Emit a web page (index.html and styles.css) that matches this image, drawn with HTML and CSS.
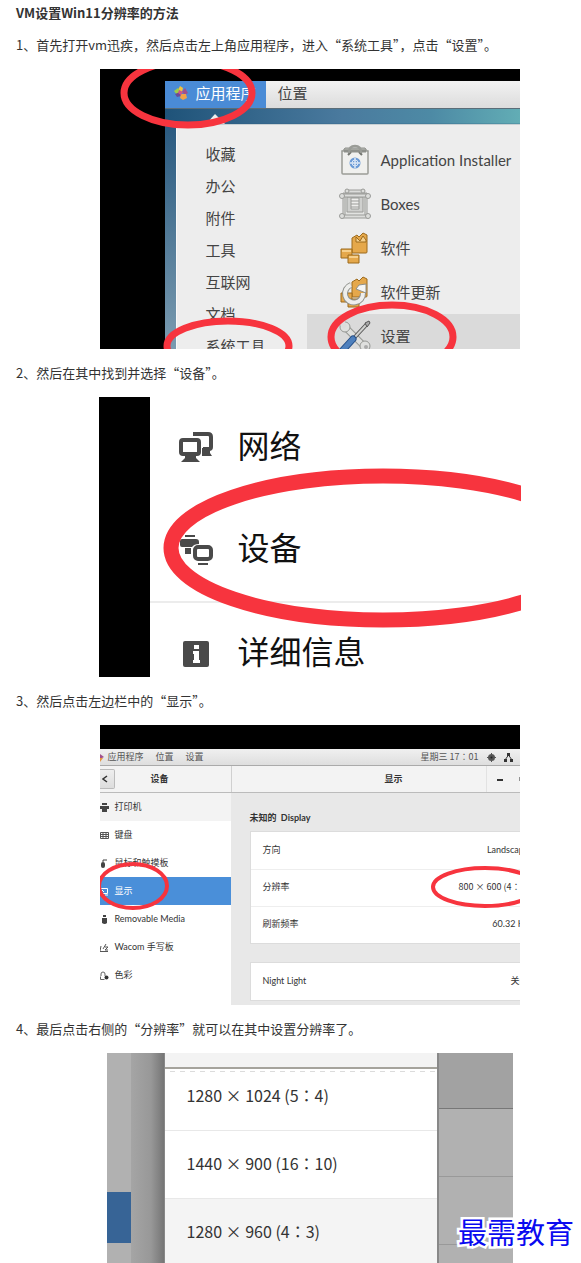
FILE: index.html
```html
<!DOCTYPE html>
<html lang="zh-CN">
<head>
  <meta charset="UTF-8">
  <meta name="viewport" content="width=device-width, initial-scale=1.0">
  <title>VM设置Win11分辨率的方法</title>
  <link rel="stylesheet" href="styles.css">
</head>
<body>

  <article class="article">
    <h1>VM设置Win11分辨率的方法</h1>

    <p>1、首先打开vm迅疾，然后点击左上角应用程序，进入“系统工具”，点击“设置”。</p>

    <!-- Step 1: applications menu -->
    <figure>
      <div class="shot apps">
        <div class="desktop">
          <div class="panel-bar">
            <button class="apps-button">
              <svg width="14" height="14" viewBox="0 0 14 14">
                <path fill="#f4c13a" d="M6 0l3 2-1 4-4-2z"/>
                <path fill="#9ccd4a" d="M0 5l4-3 3 4-4 3z"/>
                <path fill="#a14f8c" d="M8 6l3-4 3 5-3 2z"/>
                <path fill="#6a4a97" d="M1 8l5-2 1 4-4 1z"/>
                <path fill="#f1a24a" d="M7 8l5 0 1 4-4 2-3-2z"/>
                <path fill="#c9568a" d="M5 4l4 2-2 3-3-2z"/>
              </svg>
              应用程序
            </button>
            <button class="places-button">位置</button>
          </div>
          <div class="app-menu">
            <ul class="categories">
              <li><a href="#">收藏</a></li>
              <li><a href="#">办公</a></li>
              <li><a href="#">附件</a></li>
              <li><a href="#">工具</a></li>
              <li><a href="#">互联网</a></li>
              <li><a href="#">文档</a></li>
              <li><a href="#">系统工具</a></li>
            </ul>
            <ul class="programs">
              <li><a href="#">
                <svg width="28" height="32" viewBox="2 0 28 32">
                  <path d="M3 8l3-4h20l3 4z" fill="#b9bbb6" stroke="#8e908b"/>
                  <path d="M3 7h26v22q0 1-1 1H4q-1 0-1-1z" fill="#f0f0ee" stroke="#9a9c97" stroke-width="1.5"/>
                  <path d="M5 7h22" stroke="#8e908b" stroke-width="3"/>
                  <path d="M9 11l3-3M23 11l-3-3" stroke="#73756f" stroke-width="2"/>
                  <path d="M10 9q0-7 6-7t6 7" fill="none" stroke="#9a9c97" stroke-width="2.5"/>
                  <circle cx="16" cy="19" r="5.5" fill="#6c9bd6"/>
                  <path d="M16 14v10M11 19h10" stroke="#dbe7f5" stroke-width="1.5"/>
                  <circle cx="16" cy="19" r="3" fill="none" stroke="#dbe7f5"/>
                </svg>
                Application Installer</a></li>
              <li><a href="#">
                <svg width="32" height="32" viewBox="0 0 32 32" fill="#dcdddb" stroke="#9a9b98">
                  <path d="M4 5h24v24H4z" fill="#e2e3e1"/>
                  <path d="M8 9h16v15H8z" fill="#cfd0ce"/>
                  <path d="M12 10h8v11h-8z" fill="#eeeeec"/>
                  <path d="M12 13h8M12 16h8M12 19h8M6 5v24M26 5v24" fill="none"/>
                  <path d="M7 2h18v3H7zM3 6h26v3H3zM2 27h28v3H2z"/>
                  <circle cx="3" cy="8" r="2.5"/><circle cx="29" cy="8" r="2.5"/>
                  <circle cx="8" cy="3" r="2"/><circle cx="24" cy="3" r="2"/>
                  <circle cx="3" cy="28" r="2.5"/><circle cx="29" cy="28" r="2.5"/>
                </svg>
                Boxes</a></li>
              <li><a href="#">
                <svg width="32" height="32" viewBox="0 0 32 32" fill="#e5a84b" stroke="#9c6a1d">
                  <path d="M13 6l5-3 2 2 4-4 4 2v17q0 1-1 1H14q-1 0-1-1z"/>
                  <path d="M17 10V5l4 4 3-5 3 4v2z" fill="#f6d08c"/>
                  <path d="M2 17h11v9H2z"/><path d="M3 18h9v2H3z" fill="#f6cf8b" stroke="none"/>
                  <path d="M9 23h11v8H9z"/><path d="M10 24h9v2h-9z" fill="#f6cf8b" stroke="none"/>
                </svg>
                软件</a></li>
              <li><a href="#">
                <svg width="32" height="32" viewBox="0 0 32 32" fill="#e5a84b" stroke="#9c6a1d">
                  <path d="M13 6l5-3 2 2 4-4 4 2v17q0 1-1 1H14q-1 0-1-1z"/>
                  <path d="M2 17h11v9H2zM9 23h11v8H9z"/>
                  <path d="M12 9a9 9 0 1 0 12 8" fill="none" stroke="#8d8f8a" stroke-width="6"/>
                  <path d="M12 9a9 9 0 1 0 12 8" fill="none" stroke="#eeeeec" stroke-width="4"/>
                  <path d="M17 13l3-4 7-1v9z" fill="#f6f6f4" stroke="#8d8f8a"/>
                </svg>
                软件更新</a></li>
              <li class="selected"><a href="#">
                <svg width="32" height="32" viewBox="0 0 32 32">
                  <path d="M5 6l22 22" stroke="#969894" stroke-width="7" stroke-linecap="round"/>
                  <path d="M5 6l22 22" stroke="#dfe0de" stroke-width="5" stroke-linecap="round"/>
                  <circle cx="6" cy="7" r="5" fill="#dfe0de" stroke="#969894"/>
                  <circle cx="26" cy="26" r="5" fill="#dfe0de" stroke="#969894"/>
                  <path d="M0 4l5-4 3 6-3 3z" fill="#dcdcdc"/>
                  <circle cx="27" cy="27" r="2" fill="#aaa"/>
                  <path d="M15 18L28 4" stroke="#555" stroke-width="4"/>
                  <path d="M15 18L28 4" stroke="#d0d1cf" stroke-width="2"/>
                  <path d="M26 3l4-2 1 2-3 4z" fill="#aaa" stroke="#555"/>
                  <path d="M3 31L14 19" stroke="#244e88" stroke-width="7" stroke-linecap="round"/>
                  <path d="M3 31L14 19" stroke="#4e80bd" stroke-width="5" stroke-linecap="round"/>
                </svg>
                设置</a></li>
            </ul>
          </div>
        </div>
        <svg class="marks" stroke-width="7">
          <path d="M106 55l9-10 10 10z" fill="#ededed" stroke="none"/>
          <ellipse cx="88" cy="24" rx="64" ry="32"/>
          <ellipse cx="128" cy="277" rx="61" ry="25"/>
          <ellipse cx="292" cy="268" rx="61" ry="32"/>
        </svg>
      </div>
    </figure>

    <p>2、然后在其中找到并选择“设备”。</p>

    <!-- Step 2: settings list -->
    <figure>
      <div class="shot settings">
        <ul>
          <li><a href="#">
            <svg width="36" height="36" viewBox="0 0 36 36" fill="none" stroke="#4a4a4a" stroke-width="4">
              <path d="M15 4h15q3 0 3 3v10q0 2-2 2h-6"/>
              <path d="M24 18h8v5l2 3H24z" fill="#4a4a4a" stroke="none"/>
              <rect x="3" y="10" width="18" height="14" rx="2"/>
              <path d="M7 25h11v3l4 4H3l4-4z" fill="#4a4a4a" stroke="none"/>
            </svg>
            <span>网络</span></a></li>
          <li><a href="#">
            <svg width="36" height="36" viewBox="0 0 36 36" fill="#4a4a4a">
              <path d="M7 3h10v2H7z"/>
              <path d="M2 9q0-2 2-2h14q3 0 3 3v2q-5 0-7 3H4q-2 0-2-2z"/>
              <path d="M7 16h6v6H7z"/>
              <rect x="17" y="15" width="16" height="12" rx="3" fill="none" stroke="#4a4a4a" stroke-width="4"/>
              <path d="M20 31h10v2H20z"/>
            </svg>
            <span>设备</span></a></li>
          <li><a href="#">
            <svg width="36" height="36" viewBox="0 0 36 36" fill="#4a4a4a">
              <rect x="5" y="5" width="26" height="26" rx="2"/>
              <path fill="#fff" d="M16 9h5v4h-5zM15 15h6v9h1v3h-7v-3h1v-6h-1z"/>
            </svg>
            <span>详细信息</span></a></li>
        </ul>
        <svg class="marks" stroke-width="15">
          <ellipse cx="284" cy="151" rx="212" ry="72"/>
        </svg>
      </div>
    </figure>

    <p>3、然后点击左边栏中的“显示”。</p>

    <!-- Step 3: display page -->
    <figure>
      <div class="shot devices">
        <div class="screen">
          <div class="top-bar">
            <svg width="4" height="9" viewBox="0 0 4 9">
              <path fill="#a14f8c" d="M0 1l4 3-4 2z"/><path fill="#e8963c" d="M0 5l3 0-3 4z"/>
            </svg>
            <button>应用程序</button>
            <button>位置</button>
            <button>设置</button>
            <span class="status">
              <time>星期三 17：01</time>
              <svg width="9" height="9" viewBox="0 0 9 9"><circle cx="4.5" cy="4.5" r="3.5" fill="#555"/><path d="M4.5 0v9M0 4.5h9" stroke="#555"/><circle cx="4.5" cy="4.5" r="1" fill="#222"/></svg>
              <svg width="9" height="9" viewBox="0 0 9 9" fill="#333"><path d="M3 0h3v3H3zM0 6h3v3H0zM6 6h3v3H6z"/><path d="M4.5 2L1 7M4.5 2L8 7" stroke="#333"/></svg>
              <svg width="9" height="9" viewBox="0 0 9 9"><path d="M0 3h2l3-3v9L2 6H0z" fill="#555"/></svg>
            </span>
          </div>
          <div class="header-bar">
            <div class="header-left">
              <button class="back" aria-label="返回">
                <svg width="6" height="8" viewBox="0 0 6 8"><path d="M5 1L1 4l4 3" fill="none" stroke="#333" stroke-width="1.5"/></svg>
              </button>
              <b>设备</b>
            </div>
            <div class="header-right">
              <b>显示</b>
              <span class="window-buttons">
                <button aria-label="最小化"><svg width="6" height="6" viewBox="0 0 6 6"><path d="M0 4h6" stroke="#333" stroke-width="2"/></svg></button>
                <button aria-label="最大化"><svg width="6" height="6" viewBox="0 0 6 6"><path d="M1 1h4v4H1z" fill="none" stroke="#333"/></svg></button>
              </span>
            </div>
          </div>
          <div class="content">
            <ul class="sidebar">
              <li class="hover"><a href="#">
                <svg width="9" height="9" viewBox="0 0 9 9" fill="#444"><path d="M2 0h5v2H2zM0 3h9v3H0zM2 6h5v3H2z"/></svg>
                打印机</a></li>
              <li><a href="#">
                <svg width="9" height="9" viewBox="0 0 9 9" fill="none" stroke="#555"><path d="M.5 1.5h8v6h-8zM1 3.5h7M1 5.5h7M3 2v5M6 2v5"/></svg>
                键盘</a></li>
              <li><a href="#">
                <svg width="9" height="9" viewBox="0 0 9 9" fill="#444"><rect x="1" y="3" width="4" height="6" rx="2"/><path d="M3 3V1h4" fill="none" stroke="#444"/></svg>
                鼠标和触摸板</a></li>
              <li class="active"><a href="#">
                <svg width="9" height="9" viewBox="0 0 9 9" fill="none" stroke="#fff"><path d="M.5 1.5h7v5h-7zM2 3l2 2M5 8h3"/></svg>
                显示</a></li>
              <li><a href="#">
                <svg width="9" height="9" viewBox="0 0 9 9" fill="#444"><path d="M3 0h3v2H3zM2 3h5v5q-2 2-5 0z"/></svg>
                Removable Media</a></li>
              <li><a href="#">
                <svg width="9" height="9" viewBox="0 0 9 9" fill="none" stroke="#555"><path d="M0 8.5h8M1 3l-1 5M3 6l3-5M5 4h3L5 7h3"/></svg>
                Wacom 手写板</a></li>
              <li><a href="#">
                <svg width="9" height="9" viewBox="0 0 9 9"><path d="M1 5V3q0-2 2-2t2 2v2M.5 5.5v3h4" fill="none" stroke="#666"/><circle cx="6.5" cy="6.5" r="2" fill="#333"/></svg>
                色彩</a></li>
            </ul>
            <div class="display-page">
              <h2>未知的&nbsp; Display</h2>
              <dl class="card">
                <div><dt>方向</dt><dd>Landscape</dd></div>
                <div><dt>分辨率</dt><dd class="resolution">800 × 600 (4：3)</dd></div>
                <div><dt>刷新频率</dt><dd>60.32 Hz</dd></div>
              </dl>
              <dl class="card">
                <div><dt>Night Light</dt><dd>关闭</dd></div>
              </dl>
            </div>
          </div>
        </div>
        <svg class="marks" stroke-width="4">
          <ellipse cx="33" cy="161" rx="34" ry="22"/>
          <ellipse cx="385" cy="162" rx="52" ry="19"/>
        </svg>
      </div>
    </figure>

    <p>4、最后点击右侧的“分辨率”就可以在其中设置分辨率了。</p>

    <!-- Step 4: resolution list -->
    <figure>
      <div class="shot resolutions">
        <div class="dim-sidebar"><span></span></div>
        <div class="dim-gap"></div>
        <div class="dialog">
          <div class="dialog-title"></div>
          <ul>
            <li><button>1280 × 1024 (5：4)</button></li>
            <li><button>1440 × 900 (16：10)</button></li>
            <li class="selected"><button>1280 × 960 (4：3)</button></li>
          </ul>
        </div>
        <div class="dim-rows">
          <span></span><span></span><span></span><span></span>
        </div>
      </div>
    </figure>

    <div class="watermark">最需教育</div>
  </article>

</body>
</html>
```
FILE: styles.css
```css
/* Reset styling */
* {
  margin: 0;
  padding: 0;
  box-sizing: border-box;
}

body {
  font-family: "Noto Sans CJK SC", sans-serif;
  font-size: 13px;
  line-height: 24px;
  color: #333;
  background: #fff;
}

ul {
  list-style: none;
}

a {
  color: inherit;
  text-decoration: none;
}

button {
  font: inherit;
  color: inherit;
  background: none;
  border: none;
  cursor: pointer;
}

svg {
  flex: none;
}

.article {
  position: relative;
  padding: 1px 4px 0 16px;
}

h1 {
  font-size: 13px;
  font-weight: bold;
  margin-bottom: 8px;
}

figure {
  padding-left: 26px;
  margin: 12px 0;
}

figure:last-of-type {
  margin-bottom: 0;
}

/* Screenshots */
.shot {
  position: relative;
  max-width: 420px;
  height: 280px;
  margin: 0 auto;
  overflow: hidden;
}

.marks {
  position: absolute;
  top: 0;
  left: 0;
  width: 100%;
  height: 100%;
  fill: none;
  stroke: #f7343e;
  pointer-events: none;
}

/* Applications menu */
.apps {
  background: #000;
  padding: 12px 0 0 65px;
  font-family: Lato, "Noto Sans CJK SC", sans-serif;
  font-size: 15px;
  color: #444;
}

.desktop {
  background: linear-gradient(to bottom, transparent 42px, #2a5a80 44px, #7f9fb3), linear-gradient(to right, #1f5379, #4a7a9e 50%, #4d8aa5 75%, #62adb5);
}

.panel-bar {
  display: flex;
  height: 28px;
  background: linear-gradient(#f2f2f2, #dcdcdc);
  border-bottom: 1px solid #5b6d78;
}

.panel-bar button {
  padding-bottom: 3px;
}

.apps-button {
  display: flex;
  align-items: center;
  gap: 8px;
  width: 101px;
  padding-left: 9px;
  background: #4a8bd6;
  color: #fff;
  white-space: nowrap;
}

.places-button {
  padding: 0 12px;
}

.app-menu {
  display: flex;
  margin: 15px 0 0 11px;
  padding-top: 13px;
  background: #ededed;
  border-left: 1px solid #f8f8f8;
  border-top: 1px solid #c8d0d3;
}

.categories {
  width: 130px;
  padding-left: 29px;
}

.categories li {
  height: 32px;
  line-height: 32px;
}

.programs {
  flex: 1;
}

.programs a {
  display: flex;
  align-items: center;
  gap: 10px;
  height: 44px;
  padding-left: 32px;
  white-space: nowrap;
}

.programs svg {
  width: 32px;
}

.programs .selected {
  background: #dadada;
}

/* Settings list */
.settings {
  max-width: 422px;
  background: #fff;
  border-left: 51px solid #000;
  font-size: 32px;
  color: #111;
}

.settings a {
  display: flex;
  align-items: center;
  gap: 24px;
  height: 102px;
  padding-left: 28px;
}

.settings span {
  padding-bottom: 8px;
}

.settings li:last-child {
  border-top: 2px solid #ececec;
}

.settings .marks {
  left: -51px;
  width: 422px;
}

/* Display page */
.devices {
  background: #000;
  padding-top: 24px;
  font-family: Lato, "Noto Sans CJK SC", sans-serif;
  font-size: 9px;
  line-height: 16px;
  color: #333;
}

.screen {
  margin-right: -30px;
  background: #e8e8e8;
}

.top-bar {
  display: flex;
  align-items: center;
  gap: 12px;
  height: 17px;
  background: linear-gradient(#f0f0f0, #dedede);
  border-bottom: 1px solid #aaa;
  color: #555;
}

.top-bar > svg {
  margin-right: -8px;
}

.status {
  display: flex;
  align-items: center;
  gap: 8px;
  margin-left: auto;
  padding-right: 20px;
}

.header-bar {
  display: flex;
  height: 27px;
  background: #f3f3f3;
  border-bottom: 1px solid #bbb;
}

.header-left {
  display: flex;
  align-items: center;
  width: 132px;
  border-right: 1px solid #d0d0d0;
}

.header-left b {
  margin-left: 36px;
}

.back {
  display: flex;
  align-items: center;
  width: 15px;
  height: 20px;
  padding-left: 2px;
  background: linear-gradient(#eee, #ddd);
  border: 1px solid #bbb;
  border-left: none;
  border-radius: 0 2px 2px 0;
}

.header-right {
  flex: 1;
  display: flex;
  align-items: center;
  justify-content: space-between;
  padding-left: 153px;
}

.window-buttons {
  display: flex;
  align-items: center;
  gap: 16px;
  height: 100%;
  width: 64px;
  padding-left: 10px;
  border-left: 1px solid #e2e2e2;
}

.content {
  display: flex;
}

.sidebar {
  width: 131px;
  background: #fff;
}

.sidebar a {
  display: flex;
  align-items: center;
  gap: 6px;
  height: 28px;
}

.sidebar .hover {
  background: #f3f3f3;
}

.sidebar .active {
  background: #4a8fd9;
  color: #fff;
}

.display-page {
  flex: 1;
  padding: 17px 8px 6px 19px;
}

.display-page h2 {
  font-size: 9px;
  line-height: 16px;
  margin-bottom: 5px;
}

.card {
  background: #fff;
  border: 1px solid #dcdcdc;
  margin-bottom: 18px;
}

.card:last-child {
  margin-bottom: 0;
}

.card div {
  display: flex;
  justify-content: space-between;
  align-items: center;
  height: 37px;
  padding: 0 12px 2px;
}

.card div + div {
  border-top: 1px solid #eee;
}

/* centred full-width colon */
.resolution,
.status time,
.dialog button {
  font-family: "Noto Sans CJK JP", sans-serif;
  font-feature-settings: "locl" 0;
  text-spacing-trim: space-all;
}

/* Resolution list */
.resolutions {
  display: flex;
  max-width: 406px;
  height: 210px;
  background: #b1b1b1;
}

.dim-sidebar {
  width: 24px;
  padding-top: 139px;
}

.dim-sidebar span {
  display: block;
  height: 51px;
  background: #376496;
}

.dim-gap {
  width: 33px;
  background: linear-gradient(to right, #a5a5a5, #989898 60%, #757575);
}

.dialog {
  flex: 1;
  background: #fff;
  border: solid #888;
  border-width: 0 2px 0 1px;
}

.dialog-title {
  position: relative;
  height: 16px;
  background: #f3f3f3;
  border-bottom: 2px solid #a5a39c;
}

.dialog ul {
  margin-top: -6px;
}

.dialog li + li {
  border-top: 1px solid #e8e8e8;
}

.dialog li:first-child {
  background: repeating-linear-gradient(to right, transparent 0 5px, #dcdcdc 5px 10px) 0 8px / 100% 1px no-repeat;
}

.dialog .selected {
  background: #f4f4f4;
}

.dialog button {
  display: block;
  width: 100%;
  height: 67px;
  padding: 0 0 4px 22px;
  text-align: left;
  font-size: 16px;
}

.dim-rows {
  width: 74px;
}

.dim-rows span {
  display: block;
  height: 68px;
  border-bottom: 1px solid #999;
}

.dim-rows span:first-child {
  height: 56px;
  background: #a2a2a2;
  border-color: #777;
}

.dim-rows span:last-child {
  height: 18px;
  border: none;
}

.watermark {
  position: absolute;
  right: 7px;
  bottom: 12px;
  font-family: "Noto Sans CJK SC", serif;
  font-size: 29px;
  line-height: 40px;
  color: #0a0af0;
  -webkit-text-stroke: 5px #fff;
  paint-order: stroke fill;
}
```
